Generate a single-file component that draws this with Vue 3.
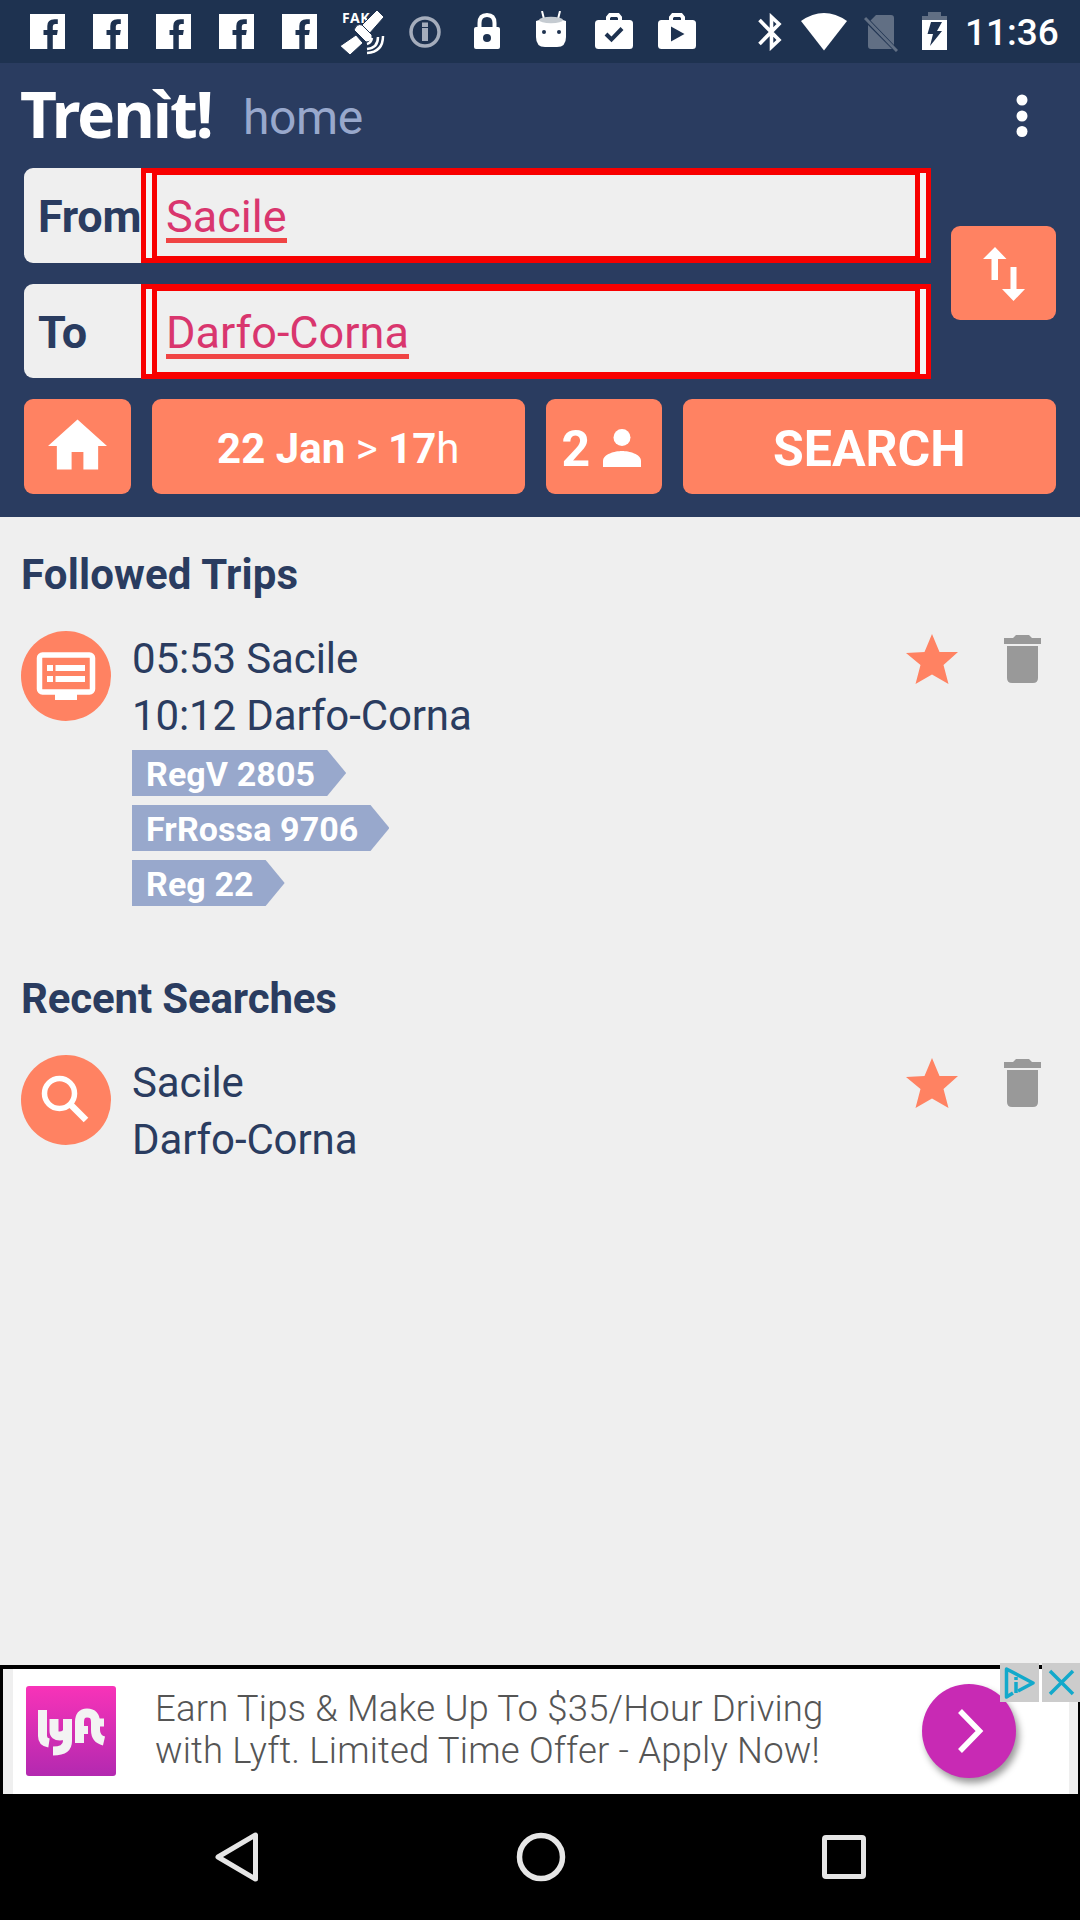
<script setup>
const fields = [
  { label: 'From', value: 'Sacile' },
  { label: 'To', value: 'Darfo-Corna' },
]
const sections = [
  { title: 'Followed Trips', icon: 'board', lines: ['05:53 Sacile', '10:12 Darfo-Corna'], tags: ['RegV 2805', 'FrRossa 9706', 'Reg 22'] },
  { title: 'Recent Searches', icon: 'search', lines: ['Sacile', 'Darfo-Corna'], tags: [] },
]
</script>

<template>
  <div class="screen">
    <div class="status">
      <svg v-for="n in 5" :key="n" class="fb" width="35" height="35" viewBox="0 0 35 35"><path fill="#fff" d="M0 0H35V35H22.800V21H27L27.800 16H22.800V12.500Q22.800 10 25 10H27.800V5.200H24.500Q17.300 5.200 17.300 12V16H13.500V21H17.300V35H0Z" /></svg>
      <svg class="sat" width="46" height="46" viewBox="0 0 46 46">
        <text x="2" y="12.500" font-family="Noto Sans, sans-serif" font-weight="700" font-size="14" letter-spacing=".6" fill="#fff">FAK</text>
        <g stroke="#1e3250" stroke-width="1">
          <path fill="#fff" d="M37 0L44 7L29 24L21 16ZM16 25L23 33L10 45L0 36Z" />
          <path fill="#fff" d="M14 20Q17 13 22 15L32 25Q33 32 26 32Z" />
        </g>
        <path fill="none" stroke="#fff" stroke-width="2.500" d="M32 28Q31 33 27 34M38 27Q38 38 27 39M43 26Q43 42 27 43" />
      </svg>
      <svg class="info" width="32" height="32" viewBox="0 0 32 32"><circle cx="16" cy="16" r="14" fill="none" stroke="#a5adbc" stroke-width="3.500" /><path stroke="#a5adbc" stroke-width="6" d="M16 6.500V11M16 12V25" /></svg>
      <svg class="lock" width="26" height="36" viewBox="0 0 26 36"><path fill="none" stroke="#fff" stroke-width="4" d="M5.500 16V10Q5.500 2 13 2T20.500 10V16" /><rect y="14" width="26" height="22" rx="2" fill="#fff" /><circle cx="13" cy="25" r="4" fill="#1e3250" /></svg>
      <svg class="droid" width="32" height="37" viewBox="0 0 32 37"><path stroke="#fff" stroke-width="2" d="M7 0L9 8M25 0L23 8" /><path fill="#fff" d="M1 10Q16 4 31 10V26Q31 36 22 36H10Q1 36 1 26Z" /><ellipse cx="16" cy="9" rx="12" ry="3.300" fill="#c5cbd1" /><circle cx="9" cy="21" r="2" fill="#1e3250" /><circle cx="24" cy="21" r="2" fill="#1e3250" /></svg>
      <svg v-for="n in 2" :key="'b' + n" class="bag" width="38" height="36" viewBox="0 0 38 36"><path fill="none" stroke="#fff" stroke-width="4" d="M13 9V4.500L15 2H23L25 4.500V9" /><rect y="7" width="38" height="29" rx="3.500" fill="#fff" /><path v-if="n === 1" fill="none" stroke="#1e3250" stroke-width="4" d="M11 21L16.500 26.500L27 15.500" /><path v-else fill="#1e3250" d="M13 13.500L26.500 21L13 28.500Z" /></svg>
      <svg class="bt" width="24" height="38" viewBox="0 0 24 38"><path fill="none" stroke="#fff" stroke-width="3.600" d="M1.500 7L21 27L13.500 34V4L21 11L1.500 31" /></svg>
      <svg class="wifi" width="46" height="38" viewBox="0 0 46 38"><path fill="#fff" d="M0 8Q23 -8 46 8L23 37.500Z" /></svg>
      <svg class="sim" width="34" height="38" viewBox="0 0 34 38"><path fill="#616f84" d="M12 1H27Q30 1 30 4V31L6.500 6.500ZM4 11L28 35H7Q4 35 4 32Z" /><path stroke="#616f84" stroke-width="3" d="M1 4L33 37" /></svg>
      <svg class="bat" width="25" height="38" viewBox="0 0 25 38"><path fill="#616f84" d="M6 0H19V4H25V8H0V4H6Z" /><path fill="#fff" d="M0 8H25V38H0Z" /><path fill="#1e3250" d="M9 10H20L15 19H20L8 34L11 22H5.500Z" /></svg>
      <span class="clock">11:36</span>
    </div>

    <header>
      <div class="title">
        <span class="brand">Trenìt!</span>
        <span class="sub">home</span>
        <svg class="dots" width="12" height="44" viewBox="0 0 12 44"><circle cx="6" cy="6" r="5.500" fill="#fff" /><circle cx="6" cy="22" r="5.500" fill="#fff" /><circle cx="6" cy="37.500" r="5.500" fill="#fff" /></svg>
      </div>
      <div class="route">
        <div class="fields">
          <div v-for="f in fields" :key="f.label" class="field">
            <label>{{ f.label }}</label>
            <div class="outer"><div class="inner"><span class="value">{{ f.value }}</span></div></div>
          </div>
        </div>
        <button class="swap"><svg width="42" height="54" viewBox="0 0 42 54"><path fill="#fff" d="M12 0L23.500 12H15V33H8.500V12H0ZM30.500 54L19 42H27.500V20H33.500V42H42Z" /></svg></button>
      </div>
      <div class="actions">
        <button class="home"><svg width="59" height="51" viewBox="0 0 60 51"><path fill="#fff" d="M30 0L60 27H51V51H36V33H24V51H9V27H0Z" /></svg></button>
        <button class="date"><span><b>22 Jan</b> &gt; <b>17</b>h</span></button>
        <button class="pax"><b>2</b><svg width="38" height="38" viewBox="0 0 38 38"><circle cx="19" cy="8.500" r="8.500" fill="#fff" /><path fill="#fff" d="M0 38V32C0 25 12 22 19 22S38 25 38 32V38Z" /></svg></button>
        <button class="go"><b>SEARCH</b></button>
      </div>
    </header>

    <main>
      <section v-for="s in sections" :key="s.title">
        <h2 :class="s.icon">{{ s.title }}</h2>
        <div class="item">
          <div class="disc">
            <svg v-if="s.icon === 'board'" width="90" height="90" viewBox="0 0 90 90"><rect x="18.500" y="24" width="53" height="37" rx="3" fill="none" stroke="#fff" stroke-width="5.500" /><path fill="#fff" d="M34 62H56V69H34ZM26 34H32V40H26ZM34.500 34H64V40H34.500ZM26 45H32V51H26ZM34.500 45H64V51H34.500Z" /></svg>
            <svg v-else width="90" height="90" viewBox="0 0 90 90"><circle cx="38.500" cy="38.500" r="15" fill="none" stroke="#fff" stroke-width="5.500" /><path stroke="#fff" stroke-width="6.500" d="M49 49L65 65" /></svg>
          </div>
          <div class="info-col">
            <div v-for="l in s.lines" :key="l" class="line">{{ l }}</div>
            <div v-for="t in s.tags" :key="t" class="tag">{{ t }}</div>
          </div>
          <svg class="star" width="52" height="50" viewBox="0 0 52 50"><path fill="#ff8262" d="M26 0L33.500 18H52L37.500 31L42.500 50L26 40.500L9.500 50L14.500 31L0 19L18.500 18Z" /></svg>
          <svg class="trash" width="37" height="48" viewBox="0 0 37 48"><path fill="#999" d="M0 3H9L12 0H25L28 3H37V9H0ZM3 11H34V43Q34 48 29 48H8Q3 48 3 43Z" /></svg>
        </div>
      </section>
    </main>

    <div class="ad">
      <div class="ad-body">
        <div class="lyft">
          <svg width="90" height="90" viewBox="0 0 90 90"><g fill="none" stroke="#f3f3f3" stroke-width="9"><path d="M16.500 24V50Q16.500 56 23 57" /><path d="M28 33V45Q28 50 34 50Q40 50 41.500 45M41.500 33V55Q41.500 65 27 65" /><path d="M53.500 57V36Q53.500 27 61 27Q69.500 27 69.500 36V44Q69.500 53 78 55" /><path d="M53 44H62M69 36.500H78" stroke-width="8" /></g></svg>
        </div>
        <div class="copy"><div>Earn Tips &amp; Make Up To $35/Hour Driving</div><div>with Lyft. Limited Time Offer - Apply Now!</div></div>
        <div class="cta"><svg width="26" height="44" viewBox="0 0 26 44"><path fill="none" stroke="#fff" stroke-width="5.500" d="M2 2L21.500 22L2 42" /></svg></div>
      </div>
      <div class="badges">
        <svg width="39" height="39" viewBox="0 0 39 39"><rect width="39" height="39" fill="#ccc" /><path fill="none" stroke="#12a9cb" stroke-width="3.500" stroke-linejoin="round" d="M13 30L6.500 34V6L33 20L18 28" /><path stroke="#12a9cb" stroke-width="3.500" d="M16 14V17M16 19V30" /></svg>
        <svg width="38" height="39" viewBox="0 0 38 39"><rect width="38" height="39" fill="#ccc" /><path stroke="#12a9cb" stroke-width="3.500" d="M8 8L31 31M31 8L8 31" /></svg>
      </div>
    </div>
    <nav>
      <svg width="44" height="50" viewBox="0 0 44 50"><path fill="none" stroke="#e6e6e6" stroke-width="5" stroke-linejoin="round" d="M40.500 3V47L3 25Z" /></svg>
      <svg width="50" height="50" viewBox="0 0 50 50"><circle cx="25" cy="25" r="21.500" fill="none" stroke="#e6e6e6" stroke-width="5.500" /></svg>
      <svg width="44" height="44" viewBox="0 0 44 44"><rect x="2.500" y="2.500" width="39" height="39" rx="1.500" fill="none" stroke="#e6e6e6" stroke-width="5" /></svg>
    </nav>
  </div>
</template>

<style>
body { margin: 0; background: #efefef; }
</style>
<style scoped>
.screen { width: 1080px; height: 1920px; background: #efefef; font-family: Roboto, sans-serif; color: #2a3c60; display: flex; flex-direction: column; overflow: hidden; white-space: nowrap; }
svg { display: block; flex: none; }
.status { height: 63px; background: #1e3250; display: flex; align-items: flex-start; padding-left: 30px; box-sizing: border-box; flex: none; }
.fb { margin: 14px 28px 0 0; }
.sat { margin: 10px 0 0 -5px; }
.info { margin: 16px 0 0 23px; }
.lock { margin: 13px 0 0 33px; }
.droid { margin: 11px 0 0 35px; }
.bag { margin: 13px 0 0 28px; }
.bag + .bag { margin-left: 25px; }
.bt { margin: 13px 0 0 62px; }
.wifi { margin: 13px 0 0 19px; }
.sim { margin: 14px 0 0 17px; }
.bat { margin: 12px 0 0 24px; }
.clock { margin: 11px 0 0 18px; font-size: 37px; line-height: 44px; color: #fff; font-weight: 500; }
header { height: 454px; background: #2a3c60; flex: none; }
.title { height: 105px; display: flex; }
.brand { width: 225px; box-sizing: border-box; padding-left: 20px; font: 700 64px/80px "Noto Sans", sans-serif; color: #fff; padding-top: 11px; letter-spacing: -2px; }
.sub { width: 771px; box-sizing: border-box; padding-left: 18px; font-size: 48px; line-height: 56px; padding-top: 27px; color: #98a8cc; letter-spacing: -.4px; }
.dots { margin-top: 31px; margin-left: 20px; }
.route { display: flex; align-items: center; padding-left: 24px; height: 210px; }
.fields { display: flex; flex-direction: column; gap: 21px; }
.field { display: flex; height: 94.500px; }
label { width: 117px; background: #efefef; border-radius: 9px 0 0 9px; font-weight: 700; font-size: 45px; line-height: 97px; height: 94.500px; padding-left: 14px; box-sizing: border-box; color: #2a3c60; letter-spacing: -.3px; }
.outer { width: 790px; height: 95px; box-sizing: border-box; border: 5px solid #f80000; background: #f4f4f4; padding: 0 6px; }
.inner { height: 85px; box-sizing: border-box; border: 5px solid #f80000; border-width: 2px 5px; padding: 10px 0 0 9px; background: #efefef; }
.value { display: inline-block; font-size: 45px; line-height: 63px; height: 53px; border-bottom: 5px solid #f04444; color: #d9366e; }
.swap { width: 105px; height: 94px; margin-left: 20px; padding-top: 1px; }
button { border: 0; padding: 0; border-radius: 9px; background: #ff8262; color: #fff; font-family: inherit; display: flex; align-items: center; justify-content: center; box-sizing: border-box; }
.actions { display: flex; gap: 21px; padding: 21px 24px 0; }
.actions button { height: 94.500px; }
.actions .home { width: 106.500px; padding: 0 0 3px 1px; }
.actions .date { width: 373.500px; font-size: 42px; padding-top: 4px; }
.actions .pax { width: 115.500px; gap: 13px; font-size: 50px; padding: 5px 5px 0 0; }
.pax svg { margin-bottom: 2px; }
.actions .go { width: 373.500px; font-size: 50px; padding-top: 5px; }
main { flex: none; height: 1148px; }
section { height: 424px; }
h2 { margin: 0; padding: 33px 0 0 21px; font-size: 42px; line-height: 50px; font-weight: 700; height: 114px; box-sizing: border-box; }
.board { letter-spacing: .15px; }
.search { letter-spacing: -.15px; }
.item { display: flex; padding-left: 21px; }
.disc { width: 90px; height: 90px; border-radius: 50%; background: #ff8262; }
.info-col { margin: -1px 0 0 21px; width: 774px; font-size: 42px; line-height: 57px; letter-spacing: -.12px; }
.tag { width: max-content; box-sizing: border-box; height: 46px; margin: 0 0 9px; padding: 0 31px 0 14px; background: #98a8cc; color: #fff; font-size: 34px; letter-spacing: .1px; font-weight: 700; line-height: 49px; clip-path: polygon(0 0, calc(100% - 19px) 0, 100% 50%, calc(100% - 19px) 100%, 0 100%); }
.line + .tag { margin-top: 6px; }
.star { margin-top: 3px; }
.trash { margin: 4px 0 0 46px; }
.ad { height: 129px; position: relative; background: #fff; border: 3px solid #000; border-width: 4px 2px 0 3px; box-sizing: border-box; flex: none; }
.ad-body { display: flex; height: 125px; border: solid #efefef; border-width: 0 9px 0 10px; box-sizing: border-box; }
.lyft { width: 90px; height: 90px; margin: 17px 0 0 13px; border-radius: 3px; background: linear-gradient(#f833b8, #b329b0); }
.copy { margin: 19px 0 0 39px; width: 767px; font-weight: 300; font-size: 36.500px; letter-spacing: .18px; line-height: 42px; color: #555; }
.cta { width: 94px; height: 94px; box-sizing: border-box; padding-left: 3px; margin-top: 15px; border-radius: 50%; background: #c82ab4; box-shadow: 3px 5px 7px #999; display: flex; align-items: center; justify-content: center; }
.badges { position: absolute; right: -2px; top: -6px; display: flex; gap: 3px; }
nav { flex: none; height: 126px; background: #000; display: flex; align-items: center; justify-content: space-between; padding: 0 214px 0 215px; box-sizing: border-box; }
</style>
